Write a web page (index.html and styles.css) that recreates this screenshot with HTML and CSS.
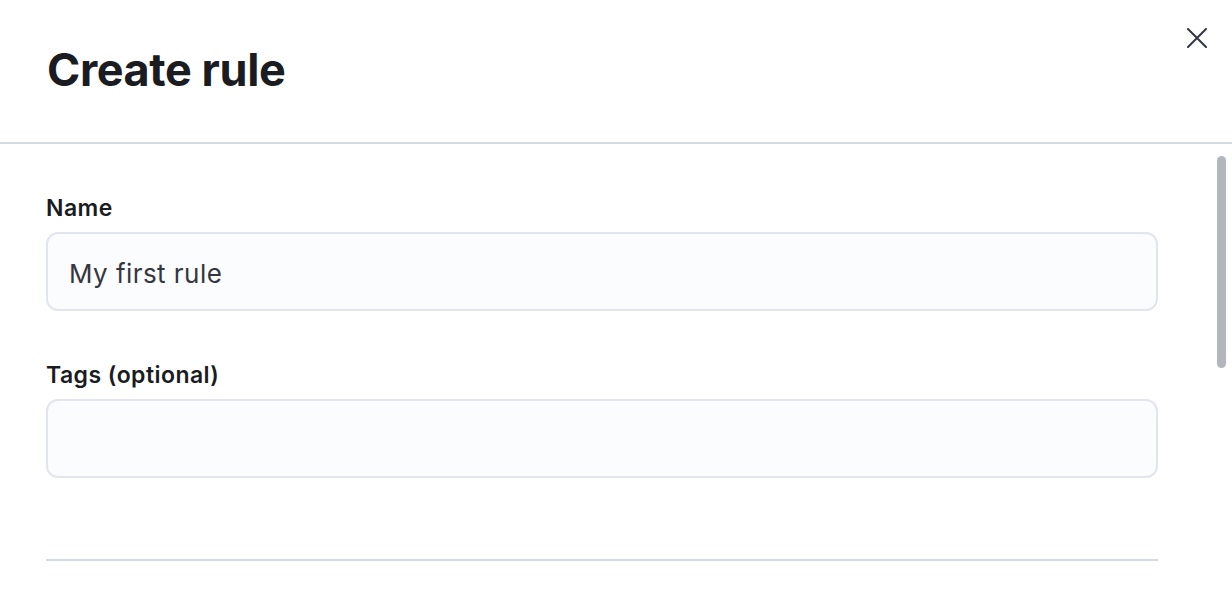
FILE: index.html
```html
<!DOCTYPE html>
<html lang="en">
<head>
    <meta charset="UTF-8">
    <title>Create rule</title>
    <link rel="stylesheet" href="styles.css">
</head>
<body>
<div class="flyout">
    <div class="flyoutHeader">
        <h2>Create rule</h2>
        <!--关闭按钮-->
        <button class="closeBtn" type="button" aria-label="Close">
            <svg width="20" height="20" viewBox="0 0 20 20">
                <path d="M1 1 L19 19 M19 1 L1 19" stroke="#343741" stroke-width="2" stroke-linecap="round" fill="none"/>
            </svg>
        </button>
    </div>
    <div class="flyoutBody">
        <div class="formRow">
            <label for="ruleName">Name</label>
            <input type="text" id="ruleName" value="My first rule">
        </div>
        <div class="formRow">
            <label for="ruleTags">Tags (optional)</label>
            <input type="text" id="ruleTags">
        </div>
        <hr class="divider">
        <!--滚动条滑块-->
        <div class="scrollThumb"></div>
    </div>
</div>
</body>
</html>
```

FILE: styles.css
```css
/*清除默认边距*/
*{
    margin: 0;
    padding: 0;
    box-sizing: border-box;
}
html,body{
    width: 100%;
    height: 100%;
    background: #fff;
    font-family: Inter, "Noto Sans", sans-serif;
    color: #1a1c21;
}
.flyout{
    height: 100%;
    display: flex;
    flex-direction: column;
    position: relative;
}
/*标题区域*/
.flyoutHeader{
    padding: 43px 46px 45px 47px;
    border-bottom: 2px solid #d3dae6;
}
.flyoutHeader h2{
    font-size: 45px;
    line-height: 54px;
    font-weight: 700;
    letter-spacing: -0.4px;
}
.closeBtn{
    position: absolute;
    top: 28px;
    right: 25px;
    width: 20px;
    height: 20px;
    border: none;
    background: none;
    display: flex;
}
/*内容区域*/
.flyoutBody{
    flex: 1;
    overflow: hidden;
    position: relative;
    padding: 50px 74px 0 46px;
}
.scrollThumb{
    position: absolute;
    top: 12px;
    right: 6px;
    width: 9px;
    height: 212px;
    border-radius: 5px;
    background: #b4b6bd;
}
.formRow{
    margin-bottom: 50px;
}
.formRow label{
    display: block;
    font-size: 23px;
    line-height: 28px;
    font-weight: 600;
    letter-spacing: 0.45px;
    margin-bottom: 10px;
}
.formRow input{
    display: block;
    width: 100%;
    height: 79px;
    padding: 3px 21px 0;
    font-family: Inter, "Noto Sans", sans-serif;
    font-size: 26px;
    letter-spacing: 0.45px;
    color: #343741;
    background: #fbfcfd;
    border: 2px solid #e3e5ee;
    border-radius: 12px;
    outline: none;
}
.divider{
    border: none;
    border-top: 2px solid #d3dae6;
    margin-top: 81px;
}
```
